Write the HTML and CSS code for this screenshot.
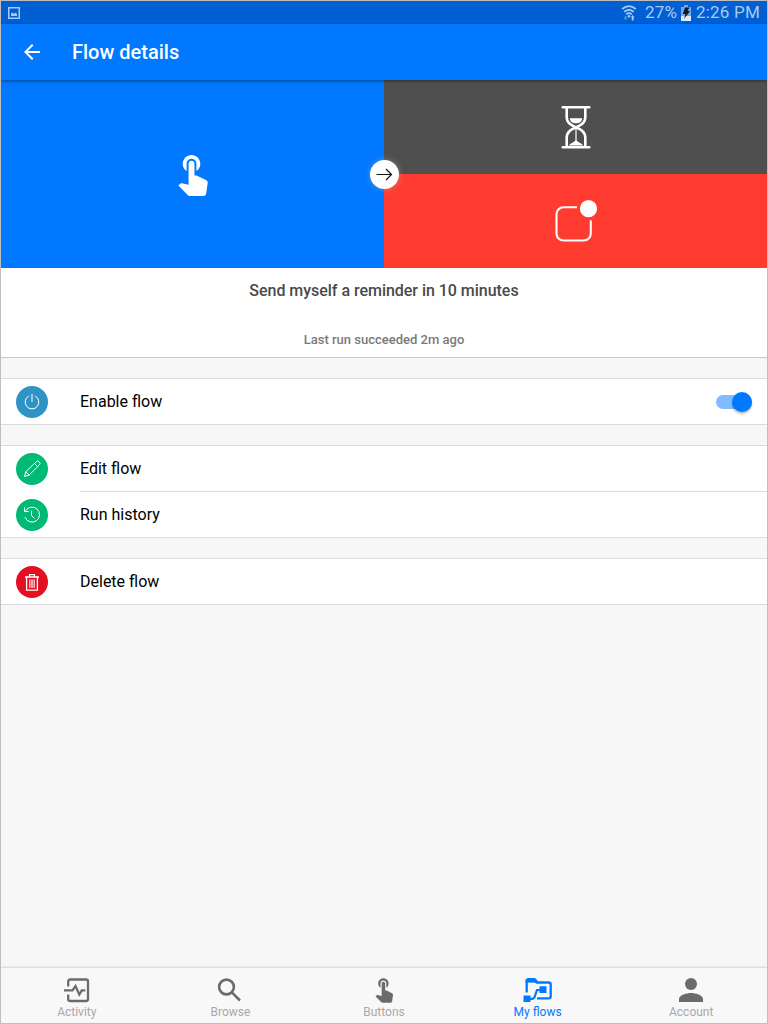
FILE: index.html
```html
<!DOCTYPE html>
<html lang="en">
<head>
<meta charset="utf-8">
<title>Flow details</title>
<link rel="stylesheet" href="styles.css">
</head>
<body>
<div class="app">
  <div class="status-bar">
    <svg class="status-picture" width="12" height="12" viewBox="0 0 12 12"><rect x=".75" y=".75" width="10.5" height="10.5" fill="none" stroke="currentColor" stroke-width="1.5"/><path d="M3 9V6.500l1.500-1 1.500 1.500 1.500-1.500L9 7v2z" fill="currentColor"/></svg>
    <div class="status-right">
      <svg class="wifi" width="16" height="18" viewBox="0 0 16 18"><g fill="none" stroke="currentColor" stroke-width="1.700"><path d="M1.200 5Q8-.6 14.800 5M3.200 7.800Q8 3.800 12.800 7.800M5.200 10.400Q8 8 10.800 10.400"/></g><circle cx="8" cy="12.300" r="1.300" fill="currentColor"/><path d="M9.800 13.500l1.900-2.500 1.900 2.500h-1v3h-1.800v-3z" fill="currentColor"/><path d="M3 14l1.500 2L6 14h-.9v-2H3.900v2z" fill="currentColor" opacity=".6"/></svg>
      <span class="battery-label">27%</span>
      <svg class="battery" width="10" height="16" viewBox="0 0 10 16"><path d="M3 0h4v2h3v14H0V2h3z" fill="#74aae6"/><path d="M0 11h10v5H0z" fill="#dcecff"/><path d="M4 2.500h4.500L6.500 6H9l-6 8 1.500-5H1.800z" fill="#101820"/></svg>
      <span class="clock">2:26 PM</span>
    </div>
  </div>
  <header class="app-bar">
    <svg class="back" width="24" height="24" viewBox="0 0 24 24"><path d="M20 11H7.830l5.590-5.590L12 4l-8 8 8 8 1.410-1.410L7.830 13H20z" fill="currentColor"/></svg>
    <h1 class="app-title">Flow details</h1>
  </header>
  <main class="content">
    <section class="hero">
      <div class="tile tile-trigger">
        <svg class="hero-touch" width="47" height="47" viewBox="0 0 24 24"><path fill="currentColor" d="M9 11.240V7.500C9 6.120 10.120 5 11.500 5S14 6.120 14 7.500v3.740c1.210-.81 2-2.180 2-3.740C16 5.010 13.990 3 11.500 3S7 5.010 7 7.500c0 1.560.79 2.930 2 3.740zm9.840 4.630l-4.540-2.260c-.17-.07-.35-.11-.54-.11H13v-6c0-.83-.67-1.500-1.500-1.500S10 6.670 10 7.500v10.740l-3.430-.72c-.08-.01-.15-.03-.24-.03-.31 0-.59.13-.79.33l-.79.8 4.940 4.940c.27.27.65.44 1.060.44h6.790c.75 0 1.330-.55 1.440-1.280l.75-5.270c.01-.07.02-.14.02-.2 0-.62-.38-1.160-.91-1.380z"/></svg>
      </div>
      <div class="actions">
        <div class="tile tile-delay">
          <svg width="32" height="46" viewBox="0 0 32 46"><g fill="none" stroke="currentColor" stroke-width="2.600" stroke-linecap="round"><path d="M2.700 3.300h26.600M2.700 43.300h26.600"/><path d="M6.700 4v9.500c0 4 3 7.500 9.300 9.900 6.300-2.400 9.300-5.900 9.300-9.900V4M6.700 42.500v-9c0-4.500 3-8 9.300-10.100 6.300 2.100 9.300 5.600 9.300 10.100v9"/></g><path d="M9.800 14.200h12.400c-.2 3-2.400 5-6.200 5s-6-2-6.200-5z" fill="currentColor"/><path d="M16 22v16" stroke="currentColor" stroke-width="1.200"/><path d="M8.500 41.500l2-1.800c2-1 4-2 5.500-3.700 1.500 1.700 3.500 2.700 5.500 3.700l2 1.800z" fill="currentColor"/></svg>
        </div>
        <div class="tile tile-notify">
          <svg width="44" height="44" viewBox="0 0 44 44"><path d="M23 8.200H9.500a7 7 0 0 0-7 7v19.300a7 7 0 0 0 7 7h20.300a7 7 0 0 0 7-7V21.300" fill="none" stroke="currentColor" stroke-width="2.100"/><circle cx="34.500" cy="9.700" r="8.600" fill="currentColor"/></svg>
        </div>
      </div>
      <div class="arrow-badge">
        <svg width="18" height="14" viewBox="0 0 18 14"><path d="M1.500 7.500h15M11 2l5.500 5.500L11 13" fill="none" stroke="#111" stroke-width="1.200"/></svg>
      </div>
    </section>
    <section class="summary">
      <h2 class="flow-name">Send myself a reminder in 10 minutes</h2>
      <p class="last-run">Last run succeeded 2m ago</p>
    </section>
    <ul class="list">
      <li class="row">
        <span class="disc disc-blue"><svg width="32" height="32" viewBox="0 0 32 32"><path d="M12.800 10.100a6.800 6.800 0 1 0 6.400 0M16 8v7.800" fill="none" stroke="currentColor" stroke-width="1"/></svg></span>
        <span class="row-label">Enable flow</span>
        <span class="switch"><span class="knob"></span></span>
      </li>
    </ul>
    <ul class="list">
      <li class="row">
        <span class="disc disc-green"><svg width="32" height="32" viewBox="0 0 32 32"><g fill="none" stroke="currentColor" stroke-width="1" stroke-linejoin="round"><path d="M8.500 23.500l1.300-4.800L20.200 8.900a2.150 2.150 0 0 1 3.100 3.100L13 22.200z"/><path d="M18.600 10.400l3.100 3.100M9.800 18.700l3.200 3.500"/></g></svg></span>
        <span class="row-label">Edit flow</span>
      </li>
      <li class="row row-divided">
        <span class="disc disc-green"><svg width="32" height="32" viewBox="0 0 32 32"><g fill="none" stroke="currentColor" stroke-width="1"><path d="M9.300 12.300A7.500 7.500 0 1 1 9 18.200M8.500 8.300v4.200h4.200M15.500 11.500v5l3 3"/></g></svg></span>
        <span class="row-label">Run history</span>
      </li>
    </ul>
    <ul class="list">
      <li class="row">
        <span class="disc disc-red"><svg width="32" height="32" viewBox="0 0 32 32"><g fill="none" stroke="currentColor" stroke-width="1.300"><path d="M9 11h14M13.500 10.500V8.700h5v1.800M10.600 11v13.200h10.800V11"/><path d="M13.700 13.500v8.500M15.200 13.500v8.500M16.800 13.500v8.500M18.300 13.500v8.500" stroke-width=".9"/></g></svg></span>
        <span class="row-label">Delete flow</span>
      </li>
    </ul>
  </main>
  <nav class="tabs">
    <a class="tab"><svg width="28" height="26" viewBox="0 0 28 26"><g fill="none" stroke="currentColor" stroke-width="2.300"><path d="M5.200 9.500V4.500q0-2 2-2H23q2 0 2 2V22q0 2-2 2H7.200q-2 0-2-2v-4.500"/><path d="M1 13.300h8.500l3-4.300 3.800 8.500 2.500-4.200h3.500"/></g></svg><span>Activity</span></a>
    <a class="tab"><svg width="28" height="26" viewBox="0 0 28 26"><g fill="none" stroke="currentColor" stroke-width="2.600"><circle cx="10.500" cy="10" r="7.400"/><path d="M15.800 15.300l8.200 8.200"/></g></svg><span>Browse</span></a>
    <a class="tab"><svg width="28" height="26" viewBox="0 2 24 22.300"><path fill="currentColor" d="M9 11.240V7.500C9 6.120 10.120 5 11.500 5S14 6.120 14 7.500v3.740c1.210-.81 2-2.180 2-3.740C16 5.010 13.990 3 11.500 3S7 5.010 7 7.500c0 1.560.79 2.930 2 3.740zm9.840 4.630l-4.540-2.260c-.17-.07-.35-.11-.54-.11H13v-6c0-.83-.67-1.500-1.500-1.500S10 6.670 10 7.500v10.740l-3.430-.72c-.08-.01-.15-.03-.24-.03-.31 0-.59.13-.79.33l-.79.8 4.940 4.940c.27.27.65.44 1.060.44h6.790c.75 0 1.330-.55 1.440-1.280l.75-5.270c.01-.07.02-.14.02-.2 0-.62-.38-1.160-.91-1.380z"/></svg><span>Buttons</span></a>
    <a class="tab tab-active"><svg width="30" height="26" viewBox="0 0 30 26"><path d="M3.700 15.500V4h8l2 1.500h12q2 0 2 2v11.800q0 2-2 2H14" fill="none" stroke="currentColor" stroke-width="2.300"/><path d="M2.600 3.500Q2.600 1 5 1h7l3 3-1.500 1.500H2.600z" fill="currentColor"/><path d="M.5 18.500h7v6.500h-7zM16.500 9.300h7v6.700h-7z" fill="currentColor"/><path d="M6 21.800h3.500l2-1.500L14 13h4" fill="none" stroke="currentColor" stroke-width="2.200"/></svg><span>My flows</span></a>
    <a class="tab"><svg width="28" height="26" viewBox="0 0 28 26"><circle cx="14" cy="7" r="6" fill="currentColor"/><path d="M2 25v-3c0-4 8-6 12-6s12 2 12 6v3z" fill="currentColor"/></svg><span>Account</span></a>
  </nav>
</div>
</body>
</html>
```
FILE: styles.css
```css
* { box-sizing: border-box; }

body {
  margin: 0;
  font-family: Roboto, "Liberation Sans", sans-serif;
}

h1, h2, p, ul { margin: 0; padding: 0; }
svg { display: block; flex: none; }

.app {
  width: 768px;
  height: 1024px;
  border: 1px solid #bfbfbf;
  background: #f7f7f7;
  display: flex;
  flex-direction: column;
  overflow: hidden;
}

.status-bar {
  height: 23px;
  flex: none;
  padding: 0 7px;
  display: flex;
  align-items: center;
  justify-content: space-between;
  background: #005fd3;
  color: #a9caf2;
}

.status-right {
  display: flex;
  align-items: center;
  font-size: 17px;
  line-height: 23px;
}

.wifi { margin-right: 8px; }
.battery-label { width: 33px; margin-right: 3px; white-space: nowrap; letter-spacing: .2px; }
.battery { margin-right: 5px; }
.clock { width: 64px; white-space: nowrap; letter-spacing: .2px; }

.app-bar {
  height: 56px;
  flex: none;
  padding: 0 19px;
  display: flex;
  align-items: center;
  background: #0078ff;
  color: #fff;
  box-shadow: 0 1px 3px rgba(0, 0, 0, .45);
  z-index: 1;
}

.app-title {
  margin-left: 28px;
  font-size: 20px;
  font-weight: 500;
  line-height: 24px;
}

.content { flex: 1; }

.hero {
  height: 188px;
  display: grid;
  grid-template-columns: 1fr 1fr;
  position: relative;
  color: #fff;
}

.tile {
  display: flex;
  align-items: center;
  justify-content: center;
}

.tile-trigger { background: #0078ff; }
.hero-touch { margin-top: -4px; }
.actions { display: grid; grid-template-rows: 1fr 1fr; }
.tile-delay { background: #4f4f4f; }
.tile-notify { background: #ff3b30; }

.arrow-badge {
  position: absolute;
  left: 50%;
  top: 50%;
  width: 29px;
  height: 29px;
  margin: -14.5px 0 0 -14.5px;
  border-radius: 50%;
  background: #fff;
  box-shadow: 0 0 6px rgba(180, 180, 180, .5);
  display: flex;
  align-items: center;
  justify-content: center;
}

.summary {
  height: 90px;
  background: #fff;
  border-bottom: 1px solid #c8c7cc;
  text-align: center;
}

.flow-name {
  padding-top: 13px;
  font-size: 16px;
  font-weight: 500;
  line-height: 20px;
  letter-spacing: -.03px;
  color: #4a4a4a;
}

.last-run {
  padding-top: 30px;
  font-size: 13px;
  font-weight: 500;
  line-height: 18px;
  color: #7a7a7a;
}

.list {
  margin-top: 20px;
  list-style: none;
  background: #fff;
  border-top: 1px solid #dcdcdc;
  border-bottom: 1px solid #dcdcdc;
}

.row {
  height: 45px;
  padding: 0 15px;
  display: flex;
  align-items: center;
}

.row-divided {
  height: 46px;
  padding-top: 1px;
  background: linear-gradient(#dcdcdc, #dcdcdc) 79px 0 / 100% 1px no-repeat;
}

.disc {
  width: 32px;
  height: 32px;
  margin-top: 1px;
  border-radius: 50%;
  color: #fff;
}

.disc-blue { background: #3093c5; }
.disc-green { background: #00b974; }
.disc-red { background: #e31022; }

.row-label {
  flex: 1;
  margin-left: 32px;
  font-size: 16px;
  line-height: 20px;
  color: #000;
}

.switch {
  width: 36px;
  height: 14px;
  border-radius: 7px;
  background: #80bcff;
  display: flex;
  align-items: center;
  justify-content: flex-end;
}

.knob {
  width: 20px;
  height: 20px;
  border-radius: 50%;
  background: #0078ff;
  box-shadow: 0 2px 2px rgba(0, 0, 0, .28);
}

.tabs {
  height: 56px;
  flex: none;
  margin: 0 -1px;
  padding-top: 9px;
  display: grid;
  grid-template-columns: repeat(5, 1fr);
  background: #f8f8f8;
  border-top: 1px solid #dedede;
  box-shadow: 0 -1px 1px rgba(0, 0, 0, .04);
}

.tab {
  display: flex;
  flex-direction: column;
  align-items: center;
  color: #6b6b6b;
}

.tab span {
  margin-top: 1px;
  font-size: 12px;
  line-height: 16px;
  color: #a8a8a8;
}

.tab-active, .tab-active span { color: #0078ff; }
```
